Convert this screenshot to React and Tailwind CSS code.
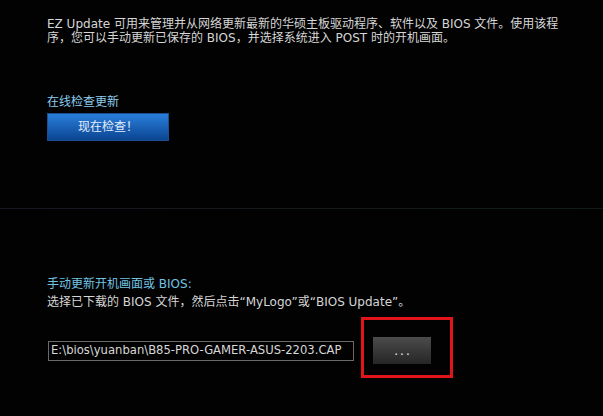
import React from "react";

const font = {
  fontFamily: '"DejaVu Sans", "Noto Sans CJK SC", sans-serif',
};

const App = () => {
  return (
    <div
      style={font}
      className="relative w-[603px] h-[416px] overflow-hidden bg-[#020202] text-[12px] text-[#d6d6d6]"
    >
      {/* intro */}
      <div className="pt-[17px] pl-[47px] leading-[14px] whitespace-nowrap">
        <p>EZ Update 可用来管理并从网络更新最新的华硕主板驱动程序、软件以及 BIOS 文件。使用该程</p>
        <p>序，您可以手动更新已保存的 BIOS，并选择系统进入 POST 时的开机画面。</p>
      </div>

      {/* online check */}
      <div className="pl-[47px] mt-[49px]">
        <p className="leading-[16px] text-[#8ccdee]">在线检查更新</p>
        <button className="mt-[3px] w-[122px] h-[28px] flex items-center justify-center border border-[#1b4f92] bg-gradient-to-b from-[#2a7fdc] to-[#0b4592] text-[#e4eefa] text-[12px]">
          现在检查！
        </button>
      </div>

      <div className="mt-[67px] h-px w-full bg-gradient-to-r from-[#15171e] to-[#121a19]" />

      {/* manual update */}
      <div className="pl-[47px] mt-[67px]">
        <p className="leading-[16px] text-[#73c2e2]">手动更新开机画面或 BIOS:</p>
        <p className="mt-[2px] leading-[16px]">选择已下载的 BIOS 文件，然后点击“MyLogo”或“BIOS Update”。</p>
        <div className="mt-[27px] flex items-center">
          <div className="ml-[1px] w-[306px] h-[20px] border border-[#6a6a6a] flex items-center pl-[2px] text-[11.6px] text-[#d8d8d8] whitespace-nowrap overflow-hidden">
            E:\bios\yuanban\B85-PRO-GAMER-ASUS-2203.CAP
          </div>
          <button className="ml-[19px] w-[58px] h-[27px] flex items-center justify-center bg-gradient-to-b from-[#4c4c4c] to-[#262626] text-[#f0f0f0] text-[12px] tracking-[2px] pl-[2px]">
            ...
          </button>
        </div>
      </div>

      {/* annotation box */}
      <div className="absolute left-[361px] top-[317px] w-[92px] h-[61px] border-[3px] border-[#e0141a]" />
    </div>
  );
};

export default App;
